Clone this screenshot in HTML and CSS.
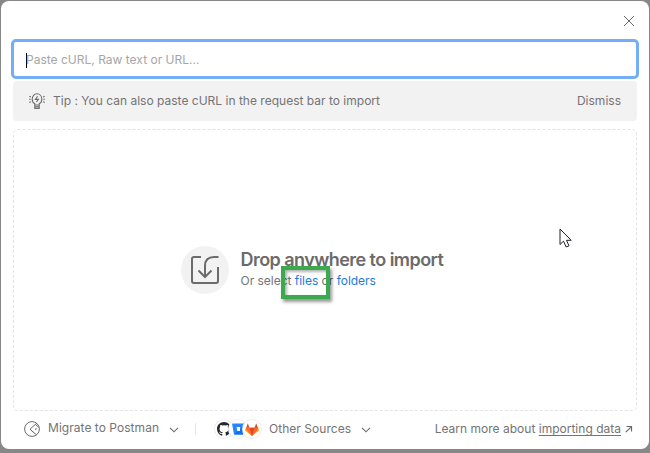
FILE: index.html
```html
<!DOCTYPE html>
<html lang="en">
<head>
<meta charset="utf-8">
<title>Import</title>
<link rel="stylesheet" href="styles.css">
</head>
<body>
<main class="modal">
  <header class="modal-header">
    <svg class="close" width="12" height="12" viewBox="0 0 12 12"><path d="M1 1L11 11M11 1L1 11"/></svg>
  </header>
  <div class="import-input"><span class="caret"></span><span class="placeholder">Paste cURL, Raw text or URL...</span></div>
  <section class="tip">
    <svg class="bulb" width="16" height="17" viewBox="0 0 16 17"><path d="M5.8 12V10.8C4.2 10 3.2 8.4 3.2 6.2C3.2 3 5.3 .8 8 .8S12.8 3 12.8 6.2C12.8 8.4 11.8 10 10.2 10.8V12ZM5.8 12V15.4H10.2V12M6 13.7H10M8.6 3.2L6.4 6.4H9.4L7.4 9M.3 3.3L1.9 4M.1 6.3H1.7M.3 9.5L1.9 8.7M15.7 3.3L14.1 4M15.9 6.3H14.3M15.7 9.5L14.1 8.7"/></svg>
    <span class="tip-text">Tip : You can also paste cURL in the request bar to import</span>
    <span class="dismiss">Dismiss</span>
  </section>
  <section class="dropzone">
    <svg class="dash" width="624" height="282"><rect x=".5" y=".5" width="623" height="281" rx="4"/></svg>
    <div class="drop-icon">
      <svg width="28" height="28" viewBox="0 0 28 28"><path d="M10 1H3Q1 1 1 3V25Q1 27 3 27H25Q27 27 27 25V11M27.5 1H23Q14 1 14 10V21M7.5 14.5L14 21L20.5 14.5"/></svg>
    </div>
    <div class="drop-copy">
      <h1>Drop anywhere to import</h1>
      <p>Or select <span class="link files">files<i class="highlight"></i></span> or <span class="link">folders</span></p>
    </div>
  </section>
  <footer class="modal-footer">
    <svg class="migrate-icon" width="16" height="16" viewBox="0 0 16 16"><circle cx="8" cy="8" r="7.4"/><path d="M12.7 2.3L6 8.2L12.4 13.8M6.2 8.2L9 11.2M11.5 3.4L14.6 6.3M12.2 7L11.6 9"/></svg>
    <span class="migrate">Migrate to Postman</span>
    <svg class="chevron" width="10" height="6" viewBox="0 0 10 6"><path d="M1 .8L5 4.8L9 .8"/></svg>
    <span class="divider"></span>
    <div class="sources">
      <span class="logo"><svg width="14" height="14" viewBox="0 0 16 16"><path fill="#24292f" d="M8 0C3.58 0 0 3.58 0 8c0 3.54 2.29 6.53 5.47 7.59.4.07.55-.17.55-.38v-1.49c-2.01.37-2.53-.49-2.69-.94-.09-.23-.48-.94-.82-1.13-.28-.15-.68-.52-.01-.53.63-.01 1.08.58 1.23.82.72 1.21 1.87.87 2.33.66.07-.52.28-.87.51-1.07-1.78-.2-3.64-.89-3.64-3.95 0-.87.31-1.59.82-2.15-.08-.2-.36-1.02.08-2.12 0 0 .67-.21 2.2.82a7.5 7.5 0 0 1 4 0c1.53-1.04 2.2-.82 2.2-.82.44 1.1.16 1.92.08 2.12.51.56.82 1.27.82 2.15 0 3.07-1.87 3.75-3.65 3.95.29.25.54.73.54 1.48v2.2c0 .21.15.46.55.38A8 8 0 0 0 16 8c0-4.42-3.58-8-8-8Z"/></svg></span>
      <span class="logo"><svg width="13" height="12" viewBox="0 0 12 12" preserveAspectRatio="none"><path fill="#2684ff" fill-rule="evenodd" d="M.4.6H11.6Q12 .6 11.9 1L10.3 11Q10.2 11.5 9.7 11.5H2.4Q1.9 11.5 1.8 11L.1 1Q0 .6 .4 .6ZM4.2 4.1L4.8 8H7.3L7.9 4.1Z"/><path fill="#1470ee" d="M11.4 4.1H7.9L7.3 8H4.8L2 11.3Q2.1 11.5 2.4 11.5H9.7Q10.2 11.5 10.3 11Z"/></svg></span>
      <span class="logo"><svg width="14" height="13" viewBox="0 0 14 13"><path fill="#fca326" d="M0 7.5L1.2 4L7 13L12.8 4L14 7.5L7 13Z"/><path fill="#fc6d26" d="M.5 5.5L1.4 4.8H12.6L13.5 5.5L7 13Z"/><path fill="#e24329" d="M1.2 4.8L2.8 .2L4.4 4.8H9.6L11.2 .2L12.8 4.8L7 13L4.4 4.8Z"/><path fill="#fc6d26" d="M1.2 4.8H4.4L7 13ZM9.6 4.8H12.8L7 13Z"/></svg></span>
    </div>
    <span class="other">Other Sources</span>
    <svg class="chevron" width="10" height="6" viewBox="0 0 10 6"><path d="M1 .8L5 4.8L9 .8"/></svg>
    <span class="learn">Learn more about <u>importing data</u></span>
    <svg class="external" width="8" height="8" viewBox="0 0 8 8"><path d="M.8 7.2L6.2 1.8M1.5 1.5H6.5V6.5"/></svg>
  </footer>
</main>
<svg class="pointer" width="14" height="21" viewBox="0 0 14 21"><path d="M1 1V16.5L4.5 13.2L7.2 19L10 17.8L7.5 12.3H12.2Z"/></svg>
</body>
</html>
```
FILE: styles.css
```css
* { box-sizing: border-box; }
body {
  margin: 0;
  height: 453px;
  padding: 1px 1px 4px;
  overflow: hidden;
  background: #878787;
  color: #747474;
  font: 12px/16px Inter, "Liberation Sans", sans-serif;
  letter-spacing: .01px;
}
svg { display: block; flex: none; fill: none; stroke: #6b6b6b; }
span { white-space: nowrap; }
.modal {
  height: 448px;
  padding: 0 12px;
  border-radius: 8px;
  background: #fff;
  display: flex;
  flex-direction: column;
}
.modal-header { height: 38px; padding: 14px 2px 0; display: flex; justify-content: flex-end; }
.import-input {
  height: 40px;
  margin: 0 -2px 2px;
  padding: 0 12px;
  border: 3px solid #74aef6;
  border-radius: 5px;
  display: flex;
  align-items: center;
}
.caret { width: 1px; height: 15px; margin: 2px -1px 0 0; background: #000; }
.placeholder { padding-top: 2px; color: #a6a6a6; }
.tip {
  height: 40px;
  padding: 0 16px;
  border-radius: 4px;
  background: #f2f2f2;
  display: flex;
  align-items: center;
}
.bulb { margin-right: 8px; stroke-width: 1.1; }
.dismiss { margin-left: auto; }
.dropzone {
  position: relative;
  height: 282px;
  margin-top: 8px;
  padding-left: 168px;
  display: flex;
  align-items: center;
}
.dash { position: absolute; inset: 0; stroke: #e3e3e3; stroke-dasharray: 3 2; }
.drop-icon {
  width: 48px;
  height: 48px;
  margin-right: 11.5px;
  border-radius: 50%;
  background: #f2f2f2;
  display: grid;
  place-items: center;
}
.drop-icon svg { stroke-width: 2; }
.drop-copy { padding-bottom: 2px; }
h1 { margin: 0; color: #6b6b6b; font-size: 18px; line-height: 24px; font-weight: 600; letter-spacing: -.55px; white-space: nowrap; }
p { margin: 0; line-height: 18px; letter-spacing: -.02px; white-space: nowrap; }
.link { color: #1f7ad8; }
.files { position: relative; }
.highlight {
  position: absolute;
  left: -14px;
  top: -7px;
  width: 49px;
  height: 33px;
  border: 4px solid #3ba94e;
  box-shadow: 2px 3px 3px rgba(0,0,0,.4), inset 2px 2px 3px rgba(0,0,0,.3);
}
.modal-footer { height: 36px; padding: 0 4px 0 11px; display: flex; align-items: center; }
.migrate { width: 112px; margin-left: 8px; padding-bottom: 2px; letter-spacing: .04px; }
.chevron { margin-left: 9px; margin-top: 1px; stroke-width: 1.1; }
.divider { width: 1px; height: 12px; margin-left: 16px; background: #e6e6e6; }
.sources { display: flex; margin-left: 19px; }
.logo {
  width: 18px;
  height: 18px;
  margin-right: -4px;
  border-radius: 50%;
  background: #fff;
  box-shadow: 0 0 0 1px #eee;
  display: grid;
  place-items: center;
}
.logo svg { stroke: none; }
.other { width: 83px; margin-left: 12px; letter-spacing: .04px; }
.learn { margin-left: auto; }
.learn u { text-underline-offset: 2px; text-decoration-skip-ink: none; }
.external { margin-left: 4px; stroke-width: 1.2; }
.pointer { position: absolute; left: 558.5px; top: 228px; fill: #fff; stroke: #20202b; }
```
